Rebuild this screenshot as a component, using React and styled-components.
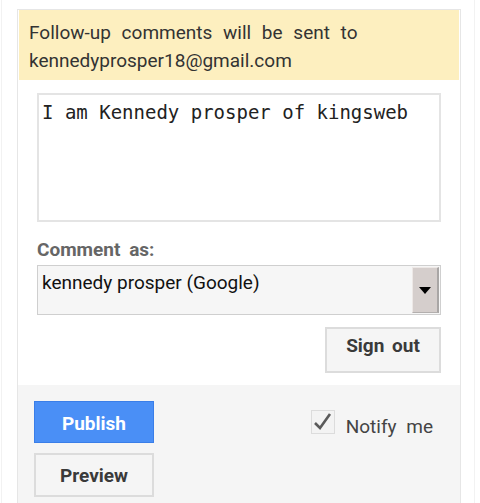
import styled, { createGlobalStyle } from 'styled-components';

const GlobalStyle = createGlobalStyle`
  html, body {
    margin: 0;
    padding: 0;
    background: #ffffff;
  }
  body {
    font-family: Roboto, "Noto Sans", sans-serif;
  }
`;

const Page = styled.div`
  width: 474px;
  min-height: 503px;
  margin-left: 1px;
  padding-top: 9px;
  box-sizing: border-box;
  border-left: 1px solid #f2f2f2;
  border-right: 1px solid #f2f2f2;
`;

const Frame = styled.div`
  width: 444px;
  margin-left: 15px;
  box-sizing: border-box;
  border: 1px solid #e6e6e6;
  border-bottom: none;
  background: #ffffff;
`;

const Notice = styled.div`
  margin: 0 1px;
  height: 70px;
  box-sizing: border-box;
  padding: 9px 10px 0 10px;
  background: #fdefbf;
  color: #333333;
  font-size: 19px;
  line-height: 28px;
  word-spacing: 6px;
`;

const Email = styled.span`
  word-spacing: 0;
`;

const Body = styled.div`
  padding: 13px 19px 12px 19px;
  display: flex;
  flex-direction: column;
`;

const TextArea = styled.div`
  height: 129px;
  box-sizing: border-box;
  border: 2px solid #e4e4e4;
  padding: 5px 4px 5px 3px;
  font-family: "DejaVu Sans Mono", monospace;
  font-size: 19px;
  line-height: 24px;
  color: #222222;
`;

const Label = styled.div`
  margin-top: 17px;
  font-size: 19px;
  line-height: 22px;
  font-weight: bold;
  color: #666666;
  word-spacing: 4px;
`;

const Select = styled.div`
  margin-top: 4px;
  height: 50px;
  box-sizing: border-box;
  border: 1px solid #cfcfcf;
  background: #f6f6f6;
  display: flex;
  justify-content: space-between;
`;

const SelectText = styled.span`
  padding: 5px 0 0 4px;
  font-size: 19px;
  line-height: 24px;
  color: #111111;
`;

const DropButton = styled.span`
  width: 27px;
  margin: 1px 1px 1px 0;
  box-sizing: border-box;
  background: #d5cecc;
  border-left: 1px solid #ede8e6;
  border-top: 1px solid #ede8e6;
  border-right: 2px solid #a9a6a5;
  border-bottom: 1px solid #b3afae;
  display: flex;
  align-items: center;
  justify-content: center;

  &::after {
    content: '';
    border-left: 6px solid transparent;
    border-right: 6px solid transparent;
    border-top: 7px solid #000000;
    margin-top: 1px;
  }
`;

const SignOutRow = styled.div`
  margin-top: 12px;
  display: flex;
  justify-content: flex-end;
`;

const GrayButton = styled.button`
  width: ${(p) => p.$width}px;
  height: ${(p) => p.$height}px;
  box-sizing: border-box;
  border: 2px solid #dcdcdc;
  background: #f5f5f5;
  color: #3a3a3a;
  font-family: Roboto, "Noto Sans", sans-serif;
  font-size: 19px;
  font-weight: bold;
  word-spacing: 3px;
  padding: ${(p) => p.$padTop}px 0 0 0;
  display: flex;
  justify-content: center;
  align-items: flex-start;
  line-height: 22px;
`;

const Footer = styled.div`
  background: #f5f5f5;
  padding: 16px 27px 7px 16px;
  display: flex;
  justify-content: space-between;
  align-items: flex-start;
`;

const ButtonColumn = styled.div`
  display: flex;
  flex-direction: column;
  gap: 10px;
`;

const PublishButton = styled.button`
  width: 120px;
  height: 42px;
  box-sizing: border-box;
  border: 1px solid #3a7ee8;
  background: #4a8ff6;
  color: #ffffff;
  font-family: Roboto, "Noto Sans", sans-serif;
  font-size: 19px;
  font-weight: bold;
  padding: 3px 0 0 0;
`;

const Notify = styled.label`
  margin-top: 9px;
  display: flex;
  align-items: flex-start;
  gap: 11px;
  font-size: 19px;
  color: #444444;
  word-spacing: 5px;
`;

const CheckBox = styled.span`
  width: 24px;
  height: 24px;
  box-sizing: border-box;
  border: 1px solid #dcdcdc;
  background: #f3f3f3;
  display: flex;
  align-items: center;
  justify-content: center;
`;

const NotifyText = styled.span`
  margin-top: 6px;
  line-height: 22px;
`;

export default function App() {
  return (
    <>
      <GlobalStyle />
      <Page>
        <Frame>
          <Notice>
            Follow-up comments will be sent to
            <br />
            <Email>kennedyprosper18@gmail.com</Email>
          </Notice>
          <Body>
            <TextArea>I am Kennedy prosper of kingsweb</TextArea>
            <Label>Comment as:</Label>
            <Select>
              <SelectText>kennedy prosper (Google)</SelectText>
              <DropButton />
            </Select>
            <SignOutRow>
              <GrayButton $width={116} $height={46} $padTop={6}>
                Sign out
              </GrayButton>
            </SignOutRow>
          </Body>
          <Footer>
            <ButtonColumn>
              <PublishButton>Publish</PublishButton>
              <GrayButton $width={120} $height={44} $padTop={10}>
                Preview
              </GrayButton>
            </ButtonColumn>
            <Notify>
              <CheckBox>
                <svg width="22" height="22" viewBox="0 0 22 22">
                  <path
                    d="M3 12 L8 17 L18 3"
                    fill="none"
                    stroke="#5a5a5a"
                    strokeWidth="2.6"
                  />
                </svg>
              </CheckBox>
              <NotifyText>Notify me</NotifyText>
            </Notify>
          </Footer>
        </Frame>
      </Page>
    </>
  );
}
